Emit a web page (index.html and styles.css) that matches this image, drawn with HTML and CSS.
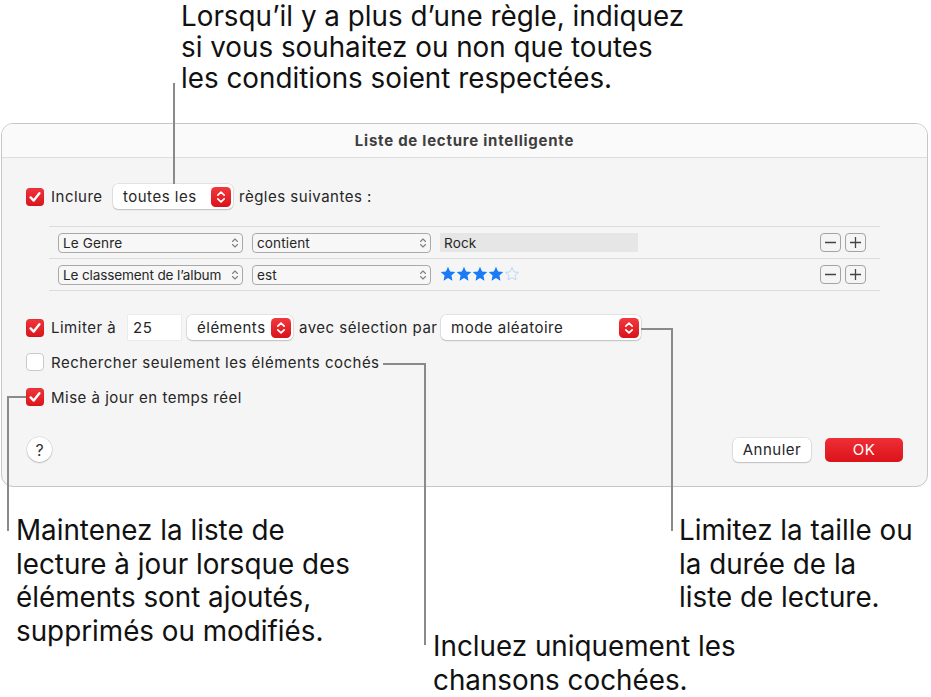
FILE: index.html
```html
<!DOCTYPE html>
<html lang="fr">
<head>
<meta charset="utf-8">
<title>Liste de lecture intelligente</title>
<link rel="stylesheet" href="styles.css">
</head>
<body>
<div class="page">
  <div class="callout-top">
    <p class="callout">Lorsqu’il y a plus d’une règle, indiquez<br>si vous souhaitez ou non que toutes<br>les conditions soient respectées.</p>
  </div>

  <div class="dialog">
    <div class="titlebar">Liste de lecture intelligente</div>
    <div class="dialog-body">
      <div class="row row-include">
        <span class="checkbox checked"><svg viewBox="0 0 18 18" width="18" height="18"><path d="M4.6 9.4 L7.7 12.6 L13.4 5.2" fill="none" stroke="#fff" stroke-width="2.4" stroke-linecap="round" stroke-linejoin="round"/></svg></span>
        <span class="label lbl-include">Inclure</span>
        <span class="popup popup-all"><span class="popup-text">toutes les</span><span class="stepper"><svg viewBox="0 0 20 20" width="20" height="20"><path d="M6.8 8.2 L10 5.2 L13.2 8.2 M6.8 11.8 L10 14.8 L13.2 11.8" fill="none" stroke="#fff" stroke-width="1.7" stroke-linecap="round" stroke-linejoin="round"/></svg></span></span>
        <span class="label">règles suivantes :</span>
      </div>

      <div class="rules">
        <div class="rule">
          <span class="rpopup rp-field"><span>Le Genre</span><svg class="chev" viewBox="0 0 8 12" width="8" height="12"><path d="M1.5 4.5 L4 2 L6.5 4.5 M1.5 7.5 L4 10 L6.5 7.5" fill="none" stroke="#808080" stroke-width="1.1" stroke-linecap="round" stroke-linejoin="round"/></svg></span>
          <span class="rpopup rp-op"><span>contient</span><svg class="chev" viewBox="0 0 8 12" width="8" height="12"><path d="M1.5 4.5 L4 2 L6.5 4.5 M1.5 7.5 L4 10 L6.5 7.5" fill="none" stroke="#808080" stroke-width="1.1" stroke-linecap="round" stroke-linejoin="round"/></svg></span>
          <span class="rfield">Rock</span>
          <span class="spacer"></span>
          <span class="pm"><svg viewBox="0 0 19 17" width="19" height="17"><path d="M4 8.5 H15" stroke="#444" stroke-width="1.3"/></svg></span><span class="pm"><svg viewBox="0 0 19 17" width="19" height="17"><path d="M4 8.5 H15 M9.5 3 V14" stroke="#444" stroke-width="1.3"/></svg></span>
        </div>
        <div class="rule">
          <span class="rpopup rp-field"><span class="rp-long">Le classement de l’album</span><svg class="chev" viewBox="0 0 8 12" width="8" height="12"><path d="M1.5 4.5 L4 2 L6.5 4.5 M1.5 7.5 L4 10 L6.5 7.5" fill="none" stroke="#808080" stroke-width="1.1" stroke-linecap="round" stroke-linejoin="round"/></svg></span>
          <span class="rpopup rp-op"><span>est</span><svg class="chev" viewBox="0 0 8 12" width="8" height="12"><path d="M1.5 4.5 L4 2 L6.5 4.5 M1.5 7.5 L4 10 L6.5 7.5" fill="none" stroke="#808080" stroke-width="1.1" stroke-linecap="round" stroke-linejoin="round"/></svg></span>
          <span class="stars">
            <svg class="star" viewBox="0 0 16 16" width="16" height="16"><path d="M8 0.8 L10.1 5.6 L15.3 6.1 L11.4 9.6 L12.5 14.8 L8 12.1 L3.5 14.8 L4.6 9.6 L0.7 6.1 L5.9 5.6 Z" fill="#1a7cf5"/></svg>
            <svg class="star" viewBox="0 0 16 16" width="16" height="16"><path d="M8 0.8 L10.1 5.6 L15.3 6.1 L11.4 9.6 L12.5 14.8 L8 12.1 L3.5 14.8 L4.6 9.6 L0.7 6.1 L5.9 5.6 Z" fill="#1a7cf5"/></svg>
            <svg class="star" viewBox="0 0 16 16" width="16" height="16"><path d="M8 0.8 L10.1 5.6 L15.3 6.1 L11.4 9.6 L12.5 14.8 L8 12.1 L3.5 14.8 L4.6 9.6 L0.7 6.1 L5.9 5.6 Z" fill="#1a7cf5"/></svg>
            <svg class="star" viewBox="0 0 16 16" width="16" height="16"><path d="M8 0.8 L10.1 5.6 L15.3 6.1 L11.4 9.6 L12.5 14.8 L8 12.1 L3.5 14.8 L4.6 9.6 L0.7 6.1 L5.9 5.6 Z" fill="#1a7cf5"/></svg>
            <svg class="star" viewBox="0 0 16 16" width="16" height="16"><path d="M8 1.6 L9.9 5.9 L14.5 6.4 L11 9.5 L12 14 L8 11.6 L4 14 L5 9.5 L1.5 6.4 L6.1 5.9 Z" fill="none" stroke="#b9d4f7" stroke-width="0.9" stroke-linejoin="round"/></svg>
          </span>
          <span class="spacer"></span>
          <span class="pm"><svg viewBox="0 0 19 17" width="19" height="17"><path d="M4 8.5 H15" stroke="#444" stroke-width="1.3"/></svg></span><span class="pm"><svg viewBox="0 0 19 17" width="19" height="17"><path d="M4 8.5 H15 M9.5 3 V14" stroke="#444" stroke-width="1.3"/></svg></span>
        </div>
      </div>

      <div class="row row-limit">
        <span class="checkbox checked"><svg viewBox="0 0 18 18" width="18" height="18"><path d="M4.6 9.4 L7.7 12.6 L13.4 5.2" fill="none" stroke="#fff" stroke-width="2.4" stroke-linecap="round" stroke-linejoin="round"/></svg></span>
        <span class="label lbl-limit">Limiter à</span>
        <span class="numfield">25</span>
        <span class="popup popup-units"><span class="popup-text">éléments</span><span class="stepper"><svg viewBox="0 0 20 20" width="20" height="20"><path d="M6.8 8.2 L10 5.2 L13.2 8.2 M6.8 11.8 L10 14.8 L13.2 11.8" fill="none" stroke="#fff" stroke-width="1.7" stroke-linecap="round" stroke-linejoin="round"/></svg></span></span>
        <span class="label lbl-sel">avec sélection par</span>
        <span class="popup popup-mode"><span class="popup-text">mode aléatoire</span><span class="stepper"><svg viewBox="0 0 20 20" width="20" height="20"><path d="M6.8 8.2 L10 5.2 L13.2 8.2 M6.8 11.8 L10 14.8 L13.2 11.8" fill="none" stroke="#fff" stroke-width="1.7" stroke-linecap="round" stroke-linejoin="round"/></svg></span></span>
      </div>

      <div class="row row-check">
        <span class="checkbox"></span>
        <span class="label">Rechercher seulement les éléments cochés</span>
      </div>

      <div class="row row-live">
        <span class="checkbox checked"><svg viewBox="0 0 18 18" width="18" height="18"><path d="M4.6 9.4 L7.7 12.6 L13.4 5.2" fill="none" stroke="#fff" stroke-width="2.4" stroke-linecap="round" stroke-linejoin="round"/></svg></span>
        <span class="label">Mise à jour en temps réel</span>
      </div>

      <div class="row row-buttons">
        <span class="help">?</span>
        <span class="spacer"></span>
        <span class="btn btn-cancel">Annuler</span>
        <span class="btn btn-ok">OK</span>
      </div>
    </div>
  </div>

  <div class="callouts-bottom">
    <p class="callout callout-a">Maintenez la liste de<br>lecture à jour lorsque des<br>éléments sont ajoutés,<br>supprimés ou modifiés.</p>
    <p class="callout callout-b">Incluez uniquement les<br>chansons cochées.</p>
    <p class="callout callout-c">Limitez la taille ou<br>la durée de la<br>liste de lecture.</p>
  </div>

  <span class="lead lead-top"></span>
  <span class="lead lead-mode-h"></span>
  <span class="lead lead-mode-v"></span>
  <span class="lead lead-check-h"></span>
  <span class="lead lead-check-v"></span>
  <span class="lead lead-live-h"></span>
  <span class="lead lead-live-v"></span>
</div>
</body>
</html>
```

FILE: styles.css
```css
* { box-sizing: border-box; }
html, body { margin: 0; padding: 0; background: #fff; }
body { width: 931px; height: 697px; overflow: hidden; font-family: Inter, "Liberation Sans", sans-serif; color: #222; }

.page { position: relative; width: 931px; height: 697px; }

.callout { margin: 0; font-family: Inter, "Liberation Sans", sans-serif; font-size: 27.8px; color: #111; }

.callout-top { height: 123px; padding: 1px 0 0 181px; }
.callout-top .callout { line-height: 31px; }

.dialog {
  margin-left: 1px;
  width: 927px;
  height: 364px;
  border: 1px solid #c6c6c6;
  border-radius: 12px;
  background: #f5f5f5;
  overflow: hidden;
}
.titlebar {
  height: 34px;
  background: #fafafa;
  border-bottom: 1px solid #dedede;
  text-align: center;
  font-weight: 700;
  font-size: 15px;
  letter-spacing: 0.75px;
  line-height: 33px;
  color: #3e3e3e;
}
.dialog-body { padding: 0 0 0 24px; display: flex; flex-direction: column; }

.row { display: flex; align-items: center; font-size: 15px; letter-spacing: 0.5px; color: #262626; }
.label { white-space: nowrap; }

.checkbox {
  width: 18px; height: 18px; border-radius: 4px;
  background: #fff; border: 1px solid #c9c9c9;
  display: inline-flex; flex: none;
  margin-right: 7px;
}
.checkbox.checked {
  border: none;
  background: linear-gradient(#f0353c, #dc141d);
  box-shadow: inset 0 0 0 0.5px rgba(0,0,0,0.12);
}

.popup {
  display: inline-flex; align-items: center; justify-content: space-between;
  height: 25px; border-radius: 5px; background: #fff;
  box-shadow: 0 0 0 0.5px rgba(0,0,0,0.14), 0 1px 1.5px rgba(0,0,0,0.16);
  padding: 0 2px 0 10px; flex: none;
}
.stepper {
  width: 20px; height: 20px; border-radius: 4.5px;
  background: linear-gradient(#f2383e, #d9121b);
  display: inline-flex;
}

.row-include { height: 25px; margin-top: 26px; }
.lbl-include { width: 62px; }
.popup-all { width: 120px; margin-right: 6px; }

.rules {
  margin-top: 17px; margin-left: 23px; width: 831px;
  border-top: 1px solid #dcdcdc;
}
.rule {
  height: 32px; border-bottom: 1px solid #dcdcdc;
  display: flex; align-items: center; padding: 0 14px 0 9px;
  font-size: 13.6px; letter-spacing: 0.1px; color: #262626;
}
.rpopup {
  height: 20px; border: 1px solid #a9a9a9; border-radius: 4px;
  display: inline-flex; align-items: center; justify-content: space-between;
  padding: 0 3px 0 4px; background: #f7f7f7; white-space: nowrap; flex: none;
}
.rp-long { letter-spacing: -0.15px; }
.rp-field { width: 185px; margin-right: 9px; }
.rp-op { width: 179px; margin-right: 9px; }
.chev { flex: none; }
.rfield {
  width: 198px; height: 19px; background: #e6e6e6;
  display: inline-flex; align-items: center; padding-left: 4px;
}
.stars { display: inline-flex; gap: 0; margin-top: -1px; }
.star { display: block; }
.spacer { flex: 1; }
.pm {
  width: 21px; height: 19px; border: 1px solid #a3a3a3; border-radius: 4px;
  display: inline-flex; align-items: center; justify-content: center;
  margin-left: 4px;
}

.row-limit { height: 25px; margin-top: 24px; }
.lbl-limit { width: 77px; }
.numfield {
  width: 53px; height: 25px; background: #fff;
  box-shadow: 0 0 0 0.5px rgba(0,0,0,0.08);
  display: inline-flex; align-items: center; padding-left: 5px;
  margin-right: 6px; flex: none;
}
.popup-units { width: 106px; margin-right: 6px; }
.lbl-sel { width: 142px; }
.popup-mode { width: 200px; }

.row-check { height: 18px; margin-top: 13px; }
.row-live { height: 18px; margin-top: 17px; }

.row-buttons { height: 25px; margin-top: 31px; padding-right: 24px; }
.help {
  width: 25px; height: 25px; border-radius: 50%; background: #fff;
  box-shadow: 0 0 0 0.5px rgba(0,0,0,0.14), 0 1px 1.5px rgba(0,0,0,0.18);
  display: inline-flex; align-items: center; justify-content: center;
  font-size: 16px; color: #333; margin-left: 1px; letter-spacing: 0;
}
.btn {
  width: 78px; height: 24px; border-radius: 5px;
  display: inline-flex; align-items: center; justify-content: center;
  font-size: 15px;
}
.btn-cancel { background: #fff; color: #262626; box-shadow: 0 0 0 0.5px rgba(0,0,0,0.14), 0 1px 1.5px rgba(0,0,0,0.16); margin-right: 14px; }
.btn-ok { background: linear-gradient(#ee2f35, #dc121b); color: #fff; }

.callouts-bottom { display: flex; align-items: flex-start; padding: 27px 0 0 16px; }
.callouts-bottom .callout { line-height: 33.5px; white-space: nowrap; }
.callout-a { width: 417px; }
.callout-b { width: 246px; margin-top: 116px; }

.lead { position: absolute; background: #8a8a8a; }
.lead-top { left: 173px; top: 83px; width: 2px; height: 101px; }
.lead-mode-h { left: 641px; top: 328px; width: 32px; height: 2px; }
.lead-mode-v { left: 671px; top: 328px; width: 2px; height: 203px; }
.lead-check-h { left: 383px; top: 363px; width: 43px; height: 2px; }
.lead-check-v { left: 424px; top: 363px; width: 2px; height: 282px; }
.lead-live-h { left: 7px; top: 396px; width: 19px; height: 2px; }
.lead-live-v { left: 7px; top: 396px; width: 2px; height: 135px; }
```
